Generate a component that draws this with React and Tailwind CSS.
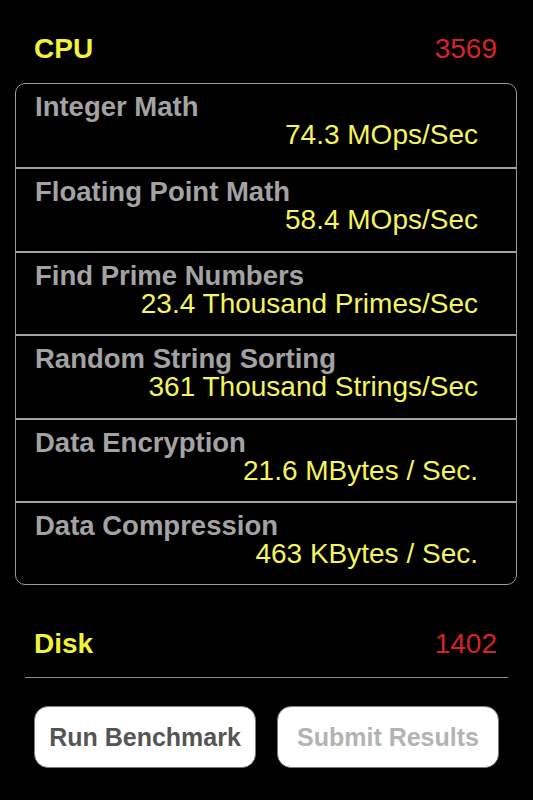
import React from "react";

const cpuTests = [
  { name: "Integer Math", value: "74.3 MOps/Sec" },
  { name: "Floating Point Math", value: "58.4 MOps/Sec" },
  { name: "Find Prime Numbers", value: "23.4 Thousand Primes/Sec" },
  { name: "Random String Sorting", value: "361 Thousand Strings/Sec" },
  { name: "Data Encryption", value: "21.6 MBytes / Sec." },
  { name: "Data Compression", value: "463 KBytes / Sec." },
];

const font = { fontFamily: '"Liberation Sans", Arial, sans-serif' };

export default function App() {
  return (
    <div className="w-[533px] h-[800px] bg-black overflow-hidden" style={font}>
      <SectionHeader title="CPU" score="3569" className="pt-[33px]" />

      <div className="mt-[19px] ml-[15px] mr-[16px] border border-[#9a9a9a] rounded-[10px] overflow-hidden">
        {cpuTests.map((test, i) => (
          <div
            key={test.name}
            className={`h-[83.4px] ${i > 0 ? "border-t-2 border-[#a4a4a4]" : ""}`}
          >
            <p className="pt-[9px] pl-[19px] text-[27.5px] leading-[28px] font-bold text-[#a3a3a3]">
              {test.name}
            </p>
            <p className="pr-[38px] text-right text-[28px] leading-[28px] text-[#f4f45c]">
              {test.value}
            </p>
          </div>
        ))}
      </div>

      <SectionHeader title="Disk" score="1402" className="pt-[43px]" />

      <div className="mt-[18px] ml-[25px] mr-[25px] h-px bg-[#8c8c8c]" />

      <div className="mt-[28px] flex gap-[21px] pl-[34px]">
        <button
          type="button"
          className="w-[222px] h-[62px] bg-white rounded-[14px] border border-[#7a7a7a] text-[25px] font-bold text-[#555555]"
        >
          Run Benchmark
        </button>
        <button
          type="button"
          className="w-[222px] h-[62px] bg-white rounded-[14px] border border-[#7a7a7a] text-[25px] font-bold text-[#b3b3b3]"
        >
          Submit Results
        </button>
      </div>
    </div>
  );
}

function SectionHeader({ title, score, className = "" }) {
  return (
    <div className={`flex items-baseline justify-between pl-[34px] pr-[36px] ${className}`}>
      <span className="text-[28px] leading-[31px] font-bold text-[#f2f23a]">{title}</span>
      <span className="text-[28px] leading-[31px] text-[#d42424]">{score}</span>
    </div>
  );
}
